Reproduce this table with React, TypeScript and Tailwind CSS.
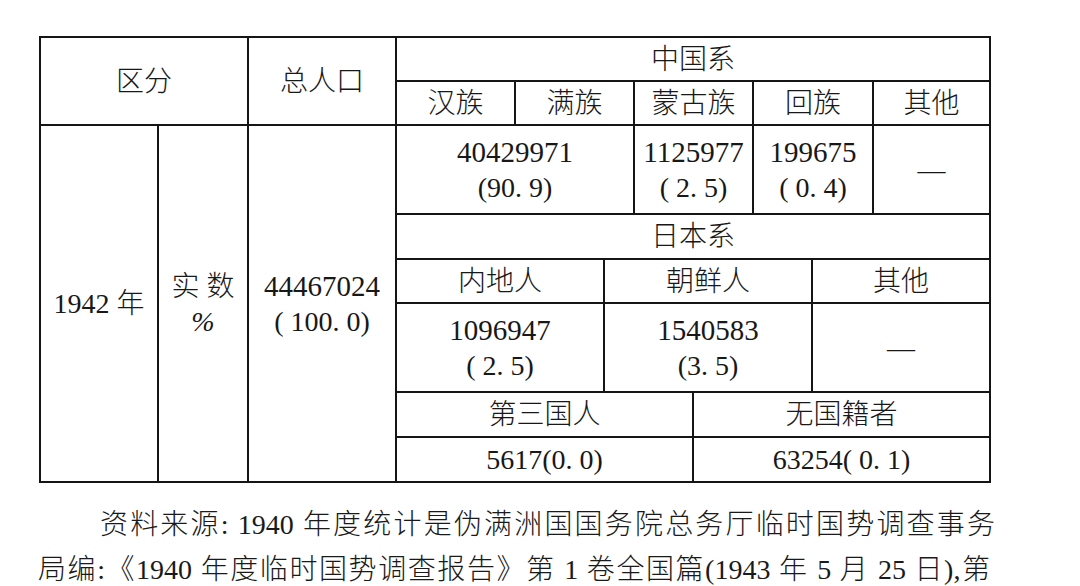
const cell = "border-2 border-[#151515] text-center align-middle p-0";

export default function App() {
  return (
    <div className="w-[1080px] h-[586px] overflow-hidden bg-white text-[#181818] font-light font-['Liberation_Serif','Noto_Sans_CJK_SC',serif]">
      <table className="ml-[39px] mt-[36px] w-[952px] table-fixed border-collapse text-[28px] leading-[35px]">
        <colgroup>
          <col className="w-[118px]" />
          <col className="w-[90px]" />
          <col className="w-[148px]" />
          <col className="w-[119px]" />
          <col className="w-[89px]" />
          <col className="w-[30px]" />
          <col className="w-[59px]" />
          <col className="w-[60px]" />
          <col className="w-[59px]" />
          <col className="w-[61px]" />
          <col className="w-[117px]" />
        </colgroup>
        <tbody>
          <tr className="h-[44px]">
            <td colSpan={2} rowSpan={2} className={cell}>区分</td>
            <td rowSpan={2} className={cell}>总人口</td>
            <td colSpan={8} className={cell}>中国系</td>
          </tr>
          <tr className="h-[44px]">
            <td className={cell}>汉族</td>
            <td colSpan={2} className={cell}>满族</td>
            <td colSpan={2} className={cell}>蒙古族</td>
            <td colSpan={2} className={cell}>回族</td>
            <td className={cell}>其他</td>
          </tr>
          <tr className="h-[89px]">
            <td rowSpan={6} className={cell}>1942 年</td>
            <td rowSpan={6} className={cell}>
              <div>实 数</div>
              <div className="italic">%</div>
            </td>
            <td rowSpan={6} className={cell}>
              <div className="text-[29px]">44467024</div>
              <div>( 100. 0)</div>
            </td>
            <td colSpan={3} className={cell}>
              <div className="text-[29px]">40429971</div>
              <div>(90. 9)</div>
            </td>
            <td colSpan={2} className={cell}>
              <div className="text-[29px]">1125977</div>
              <div>( 2. 5)</div>
            </td>
            <td colSpan={2} className={cell}>
              <div className="text-[29px]">199675</div>
              <div>( 0. 4)</div>
            </td>
            <td className={cell}>—</td>
          </tr>
          <tr className="h-[45px]">
            <td colSpan={8} className={cell}>日本系</td>
          </tr>
          <tr className="h-[44px]">
            <td colSpan={2} className={cell}>内地人</td>
            <td colSpan={4} className={cell}>朝鲜人</td>
            <td colSpan={2} className={cell}>其他</td>
          </tr>
          <tr className="h-[89px]">
            <td colSpan={2} className={cell}>
              <div className="text-[29px]">1096947</div>
              <div>( 2. 5)</div>
            </td>
            <td colSpan={4} className={cell}>
              <div className="text-[29px]">1540583</div>
              <div>(3. 5)</div>
            </td>
            <td colSpan={2} className={cell}>—</td>
          </tr>
          <tr className="h-[45px]">
            <td colSpan={4} className={cell}>第三国人</td>
            <td colSpan={4} className={cell}>无国籍者</td>
          </tr>
          <tr className="h-[45px]">
            <td colSpan={4} className={cell}>5617(0. 0)</td>
            <td colSpan={4} className={cell}>63254( 0. 1)</td>
          </tr>
        </tbody>
      </table>

      <div className="mt-[19px] text-[28px] leading-[45px] text-[#1a1a1a]">
        <p className="ml-[100px] mr-[85px] [text-align-last:justify]">
          资料来源: 1940 年度统计是伪满洲国国务院总务厅临时国势调查事务
        </p>
        <p className="ml-[38px] mr-[90px] [text-align-last:justify]">
          局编:《1940 年度临时国势调查报告》第 1 卷全国篇(1943 年 5 月 25 日),第
        </p>
      </div>
    </div>
  );
}
